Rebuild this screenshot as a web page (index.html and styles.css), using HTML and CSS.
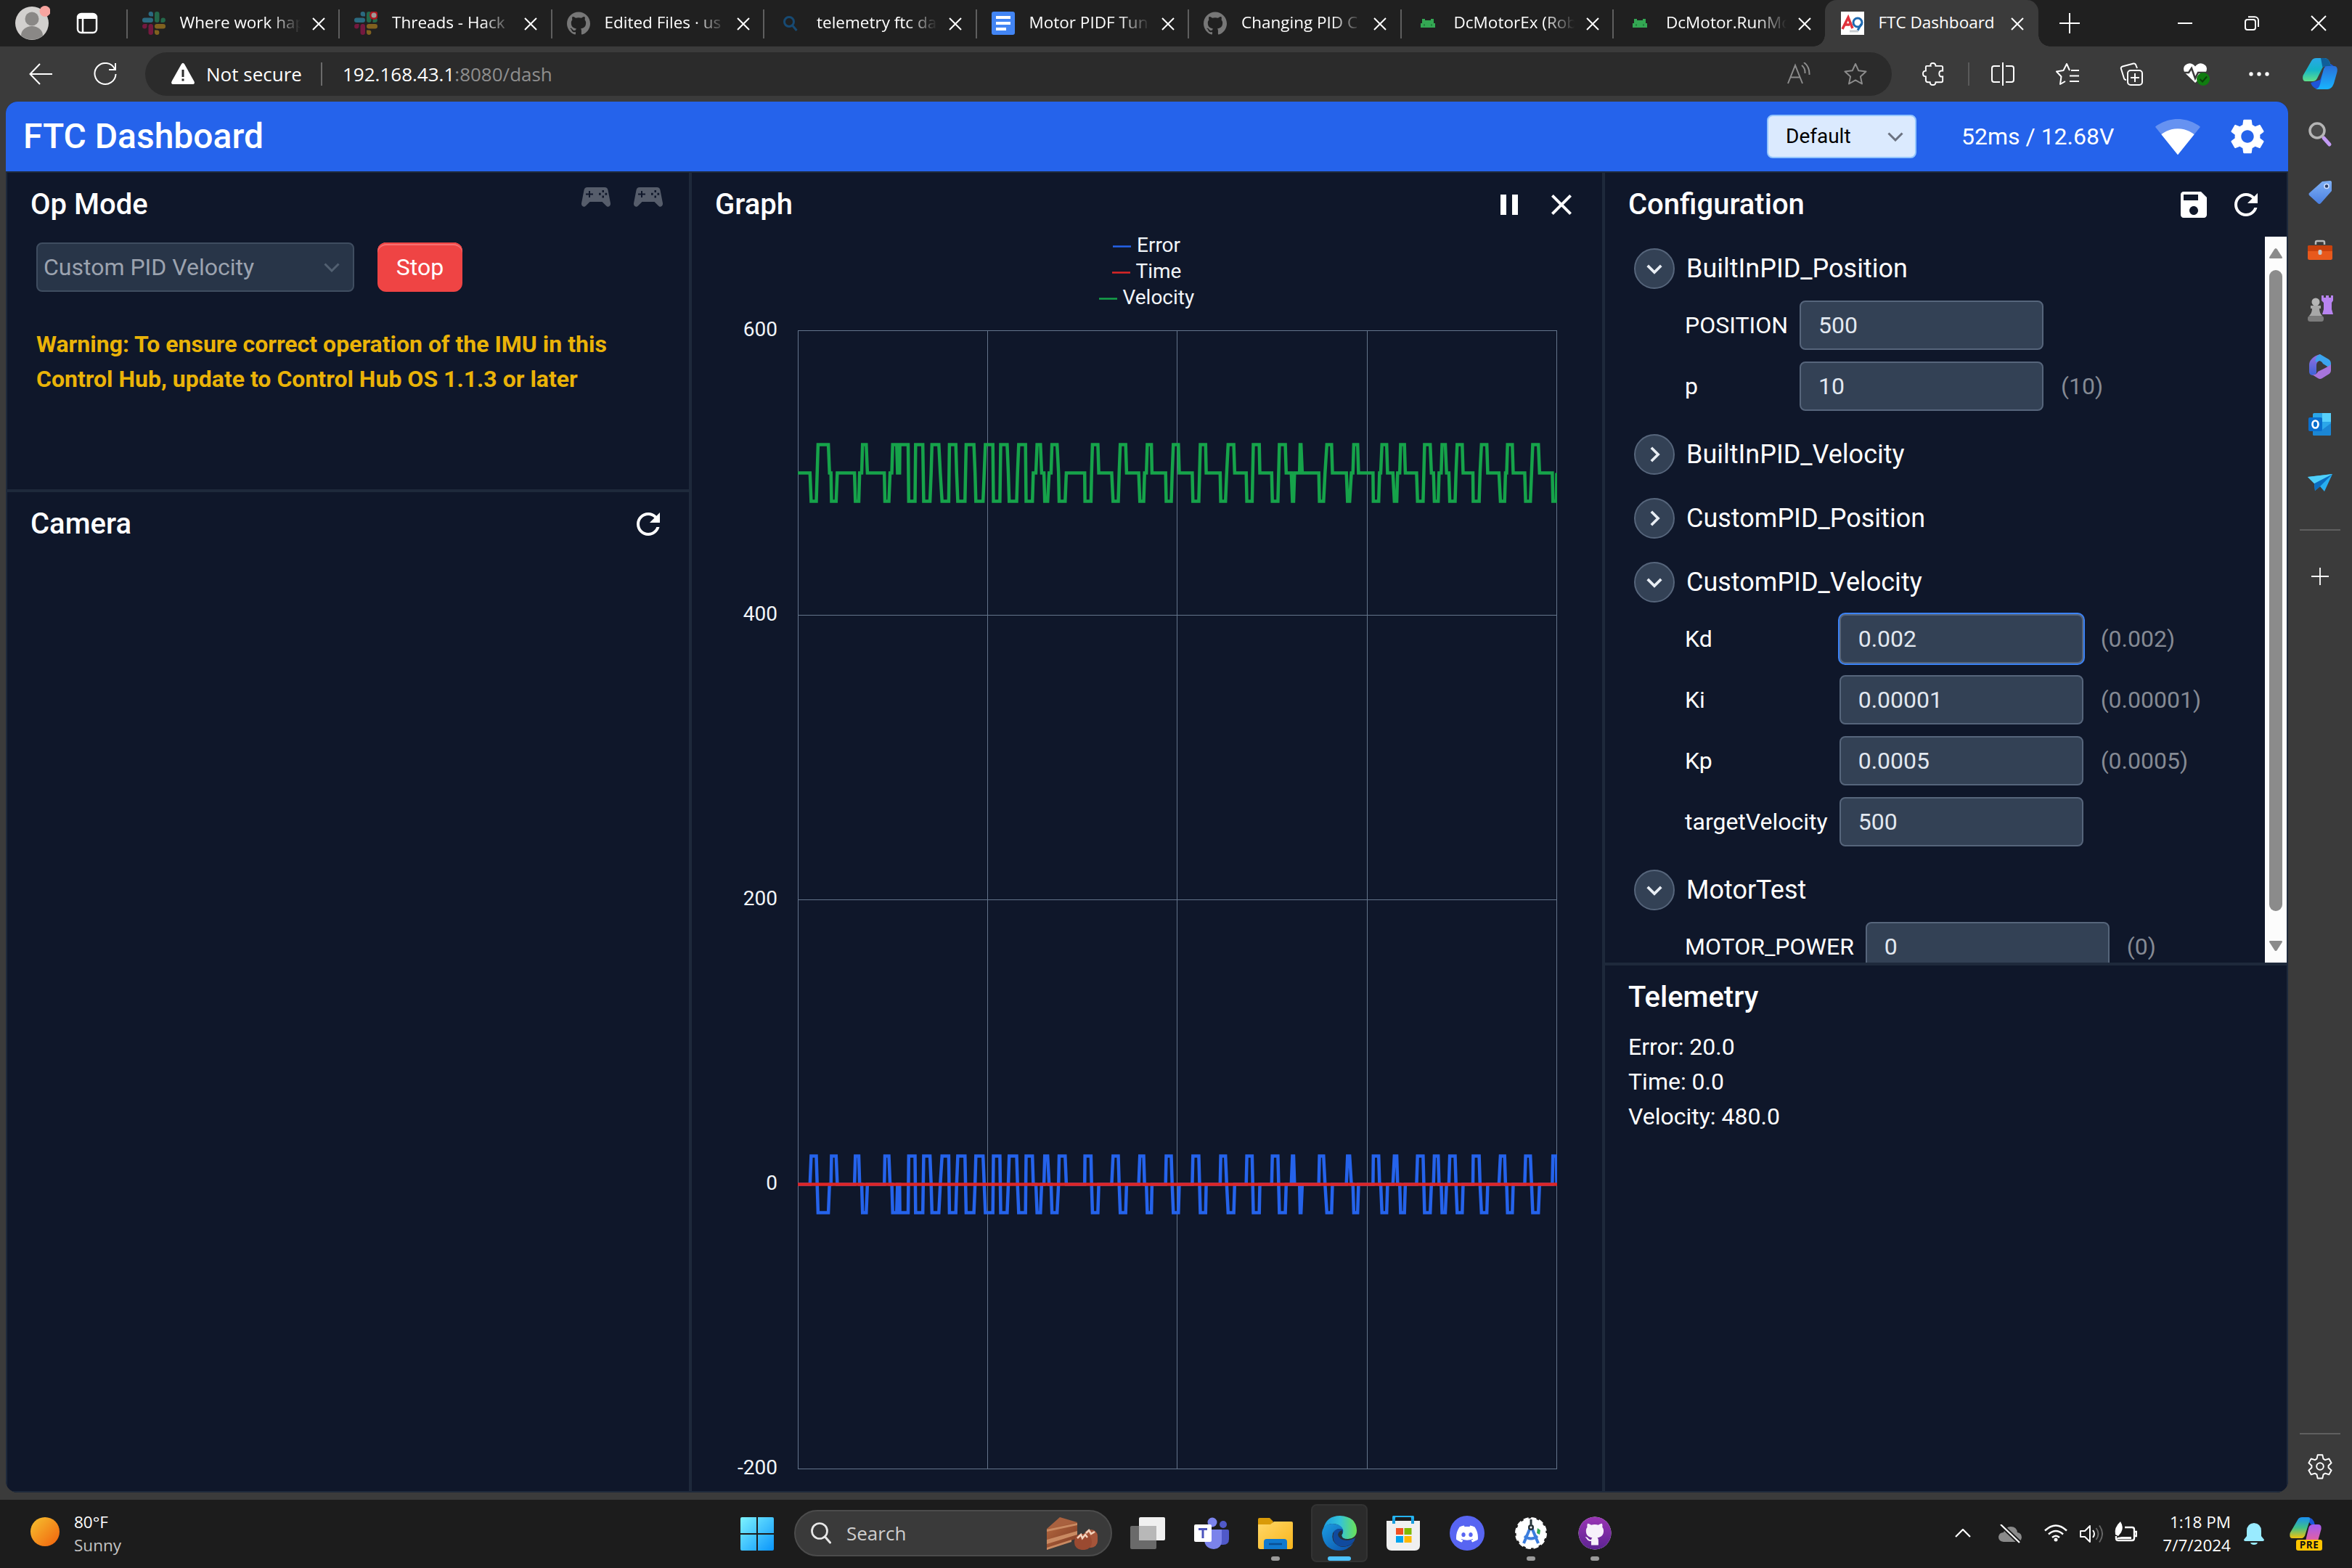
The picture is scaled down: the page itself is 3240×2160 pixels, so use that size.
FILE: index.html
```html
<!DOCTYPE html>
<html lang="en">
<head>
<meta charset="utf-8">
<title>FTC Dashboard</title>
<link rel="stylesheet" href="styles.css">
</head>
<body>
<svg class="defs" width="0" height="0">
  <defs>
    <linearGradient id="g-sun" x1="0" y1="0" x2="1" y2="1"><stop offset=".1" stop-color="#f5b92c"/><stop offset=".9" stop-color="#f26a10"/></linearGradient>
    <linearGradient id="g-win" x1="0" y1="0" x2="1" y2="1"><stop offset="0" stop-color="#7df3ff"/><stop offset="1" stop-color="#0a95fb"/></linearGradient>
    <linearGradient id="g-cop1" x1="0" y1="0" x2="0" y2="1"><stop offset="0" stop-color="#2aa7e8"/><stop offset=".5" stop-color="#14b4c8"/><stop offset="1" stop-color="#5fe08a"/></linearGradient>
    <linearGradient id="g-cop2" x1="0" y1="0" x2="0" y2="1"><stop offset="0" stop-color="#2a6fd8"/><stop offset="1" stop-color="#18b4ff"/></linearGradient>
    <linearGradient id="g-pre1" x1="0" y1="0" x2="0" y2="1"><stop offset="0" stop-color="#1a8ff0"/><stop offset=".5" stop-color="#3fc08a"/><stop offset="1" stop-color="#f4c20c"/></linearGradient>
    <linearGradient id="g-pre2" x1="0" y1="0" x2="0" y2="1"><stop offset="0" stop-color="#a25bf0"/><stop offset="1" stop-color="#f8618a"/></linearGradient>
    <linearGradient id="g-edge1" x1="0" y1="0" x2="1" y2="0"><stop offset="0" stop-color="#1b9de2"/><stop offset=".5" stop-color="#34c3d8"/><stop offset="1" stop-color="#6be355"/></linearGradient>
    <linearGradient id="g-edge2" x1="0" y1="0" x2="1" y2="1"><stop offset="0" stop-color="#1b9de2"/><stop offset="1" stop-color="#0c4da8"/></linearGradient>
    <linearGradient id="g-folder" x1="0" y1="0" x2="1" y2="1"><stop offset="0" stop-color="#ffd768"/><stop offset="1" stop-color="#f8b51b"/></linearGradient>
    <linearGradient id="g-tag" x1="0" y1="0" x2="0" y2="1"><stop offset="0" stop-color="#7fb0f5"/><stop offset="1" stop-color="#4a7fe0"/></linearGradient>
    <linearGradient id="g-m365" x1="0" y1="0" x2="0" y2="1"><stop offset="0" stop-color="#9a6fe0"/><stop offset="1" stop-color="#3b63d8"/></linearGradient>
    <linearGradient id="g-cake" x1="0" y1="0" x2="1" y2="1"><stop offset="0" stop-color="#b4683f"/><stop offset="1" stop-color="#7d3a24"/></linearGradient>
    <linearGradient id="g-git" x1="0" y1="0" x2="0" y2="1"><stop offset="0" stop-color="#9a35b5"/><stop offset="1" stop-color="#5c2391"/></linearGradient>
  </defs>
  <symbol id="slack" viewBox="0 0 32 32">
    <g fill="#2b6a80"><rect x="0" y="8.500" width="15" height="6.500" rx="3.200"/><path d="M15 6.500h-3.200A3.200 3.200 0 1 1 15 3.200z"/></g>
    <g fill="#24684a"><rect x="17" y="0" width="6.500" height="15" rx="3.200"/><path d="M25.500 15v-3.300a3.200 3.200 0 1 1 3.200 3.300z"/></g>
    <g fill="#80611f"><rect x="17" y="17" width="15" height="6.500" rx="3.200"/><path d="M17 25.500h3.200A3.200 3.200 0 1 1 17 28.800z"/></g>
    <g fill="#74193f"><rect x="8.500" y="17" width="6.500" height="15" rx="3.200"/><path d="M6.500 17v3.300A3.200 3.200 0 1 1 3.300 17z"/></g>
  </symbol>
  <symbol id="github" viewBox="0 0 24 24"><path d="M12 .297c-6.63 0-12 5.373-12 12 0 5.303 3.438 9.800 8.205 11.385.6.113.82-.258.82-.577 0-.285-.01-1.040-.015-2.040-3.338.724-4.042-1.610-4.042-1.610C4.422 18.070 3.633 17.700 3.633 17.700c-1.087-.744.084-.729.084-.729 1.205.084 1.838 1.236 1.838 1.236 1.070 1.835 2.809 1.305 3.495.998.108-.776.417-1.305.76-1.605-2.665-.3-5.466-1.332-5.466-5.930 0-1.310.465-2.380 1.235-3.220-.135-.303-.54-1.523.105-3.176 0 0 1.005-.322 3.300 1.230.96-.267 1.980-.399 3-.405 1.020.006 2.040.138 3 .405 2.280-1.552 3.285-1.230 3.285-1.230.645 1.653.24 2.873.12 3.176.765.84 1.230 1.910 1.230 3.220 0 4.610-2.805 5.625-5.475 5.920.42.36.81 1.096.81 2.220 0 1.606-.015 2.896-.015 3.286 0 .315.21.69.825.57C20.565 22.092 24 17.592 24 12.297c0-6.627-5.373-12-12-12"/></symbol>
  <symbol id="droid" viewBox="0 0 32 32"><path fill="#34a853" d="M8 10h4v2h8v-2h4v6h2v6H6v-6h2z"/><path d="M11 17v3M21 17v3" stroke="#1f7a3b" stroke-width="1.500"/></symbol>
  <symbol id="x" viewBox="0 0 18 18"><path d="M1 1l16 16M17 1L1 17" stroke="#fff" stroke-width="2" fill="none"/></symbol>
  <symbol id="refresh" viewBox="0 0 24 24"><path fill="#fff" d="M17.650 6.350C16.200 4.900 14.210 4 12 4c-4.420 0-7.990 3.580-7.990 8s3.570 8 7.990 8c3.730 0 6.840-2.550 7.730-6h-2.080c-.82 2.330-3.040 4-5.650 4-3.310 0-6-2.690-6-6s2.690-6 6-6c1.660 0 3.140.69 4.220 1.780L13 11h7V4l-2.350 2.350z"/></symbol>
  <symbol id="pad" viewBox="0 0 40 27"><path fill="#565d6b" fill-rule="evenodd" d="M8 0h24c2.500 0 4 1.500 4.500 4L40 22c.5 4-3.500 6.500-6 3.500L28.500 20h-17L6 25.500C3.500 28.500-.5 26 0 22L3.500 4C4 1.500 5.500 0 8 0zM10 5v3.500H6v2h4V14h2v-3.500h4v-2h-4V5zM28.500 4v3h2.500V4zM28.500 11.500v3h2.500v-3zM24 7.800v3h2.700v-3zM32.500 7.800v3h2.700v-3z"/></symbol>
  <symbol id="down" viewBox="0 0 56 56"><path d="M18 23.500l10 10 10-10" stroke="#e8edf3" stroke-width="4" fill="none"/></symbol>
  <symbol id="right" viewBox="0 0 56 56"><path d="M23.500 18l10 10-10 10" stroke="#e8edf3" stroke-width="4" fill="none"/></symbol>
</svg>

<header class="tabs">
  <svg class="avatar" viewBox="0 0 48 48"><circle cx="23" cy="25" r="23" fill="#d2d0ce"/><circle cx="23" cy="19" r="9.500" fill="#8a8886"/><path d="M8 42a15 13 0 0 1 30 0 23 23 0 0 1-30 0z" fill="#8a8886"/><circle cx="41" cy="8.500" r="7.500" fill="#f8a5a0"/></svg>
  <svg class="tabmenu" viewBox="0 0 30 30"><rect x="2" y="2" width="26" height="26" rx="5" fill="none" stroke="#fff" stroke-width="2.500"/><path d="M2 9V6q0-4 4-4h18q4 0 4 4v3z" fill="#fff"/><path d="M9 9v19" stroke="#fff" stroke-width="2.500"/></svg>
  <div class="tab"><svg class="fav"><use href="#slack"/></svg><span class="tt">Where work hap</span><svg class="cl"><use href="#x"/></svg></div>
  <div class="tab"><svg class="fav" viewBox="0 0 32 32"><use href="#slack" width="32" height="32"/><circle cx="27" cy="5" r="6" fill="#b0141e"/><circle cx="27" cy="5" r="3.500" fill="#a09a98"/></svg><span class="tt">Threads - Hack</span><svg class="cl"><use href="#x"/></svg></div>
  <div class="tab"><svg class="fav" fill="#777"><use href="#github"/></svg><span class="tt">Edited Files · us</span><svg class="cl"><use href="#x"/></svg></div>
  <div class="tab"><svg class="fav" viewBox="0 0 32 32"><circle cx="14" cy="14" r="6.500" fill="none" stroke="#174a73" stroke-width="3"/><path d="M18.500 19l6 7" stroke="#174a73" stroke-width="3"/></svg><span class="tt">telemetry ftc da</span><svg class="cl"><use href="#x"/></svg></div>
  <div class="tab"><svg class="fav" viewBox="0 0 32 32"><rect width="32" height="32" rx="3" fill="#4285f4"/><path d="M6 8h20M6 16h20M6 24h14" stroke="#fff" stroke-width="4"/></svg><span class="tt">Motor PIDF Tun</span><svg class="cl"><use href="#x"/></svg></div>
  <div class="tab"><svg class="fav" fill="#777"><use href="#github"/></svg><span class="tt">Changing PID C</span><svg class="cl"><use href="#x"/></svg></div>
  <div class="tab"><svg class="fav"><use href="#droid"/></svg><span class="tt">DcMotorEx (Rob</span><svg class="cl"><use href="#x"/></svg></div>
  <div class="tab"><svg class="fav"><use href="#droid"/></svg><span class="tt">DcMotor.RunMo</span><svg class="cl"><use href="#x"/></svg></div>
  <div class="tab active"><svg class="fav" viewBox="0 0 32 32"><path fill="#fff" d="M0 0h32v32H0z"/><path d="M2 24L10 8l6 15M5 18h7" fill="none" stroke="#e0323c" stroke-width="3.500"/><circle cx="23" cy="15" r="6" fill="none" stroke="#1c68b0" stroke-width="3"/><path d="M28 17l-5 9" stroke="#1c68b0" stroke-width="3"/><path d="M12 27h12" stroke="#c8ccd0" stroke-width="3"/></svg><span class="tt full">FTC Dashboard</span><svg class="cl"><use href="#x"/></svg></div>
  <svg class="newtab" viewBox="0 0 28 28"><path d="M14 0v28M0 14h28" stroke="#fff" stroke-width="2"/></svg>
  <div class="win">
    <svg viewBox="0 0 20 20"><path d="M0 10h20" stroke="#fff" stroke-width="2"/></svg>
    <svg viewBox="0 0 20 20"><rect x="1" y="5" width="14" height="14" rx="3" fill="none" stroke="#fff" stroke-width="2"/><path d="M5 1.200h9a5 5 0 0 1 5 5V15" fill="none" stroke="#fff" stroke-width="2"/></svg>
    <svg viewBox="0 0 20 20"><path d="M0 0l20 20M20 0L0 20" stroke="#fff" stroke-width="2"/></svg>
  </div>
</header>

<div class="toolbar">
  <svg class="back" viewBox="0 0 32 32"><path d="M32 16H1.500M15 2L1.500 16 15 30" fill="none" stroke="#fff" stroke-width="2"/></svg>
  <svg class="reload" viewBox="0 0 32 32"><path d="M29 9A14.500 14.500 0 1 0 30.500 16M30 1v9h-9" fill="none" stroke="#fff" stroke-width="2"/></svg>
  <div class="url">
    <svg class="warn" viewBox="0 0 32 32"><path fill="#fff" d="M13.800 2.500q2.200-3.600 4.400 0L31.400 26q1.600 4-2.400 4H3q-4 0-2.400-4z"/><path d="M16 10v10M16 22.500v3" stroke="#2b2b2b" stroke-width="3"/></svg>
    <span class="sec">Not secure</span><i class="bar"></i><span class="addr">192.168.43.1<em>:8080/dash</em></span>
    <svg class="read" viewBox="0 0 32 32"><path d="M1 29L11 4l10 25M4.500 20.500h13M20 4q5 4 4.500 11M23 0q8 6 7.500 17" fill="none" stroke="#8c8c8c" stroke-width="2"/></svg>
    <svg class="star" viewBox="0 0 32 32"><path d="M16 2l4.300 9.300 10.200 1.200-7.600 6.900 2.100 10.100-9-5.100-9 5.100 2.100-10.100L1.500 12.500l10.200-1.200z" fill="none" stroke="#8c8c8c" stroke-width="2" stroke-linejoin="round"/></svg>
  </div>
  <svg class="ti puzzle" viewBox="0 0 32 32"><path d="M5 5h6q-1-4 3-4t4 4h8q2 0 2 2v5q-5-1-5 4t5 4v6q0 2-2 2h-8q0 4-4 4t-4-4H7q-3 0-3-3v-5q-4 0-4-4t4-4V7q0-2 1-2z" fill="none" stroke="#fff" stroke-width="2" transform="translate(2 0)scale(.97)"/></svg>
  <i class="bar thin"></i>
  <svg class="ti split" viewBox="0 0 32 32"><path d="M12 5H4q-3 0-3 3v16q0 3 3 3h8M20 5h8q3 0 3 3v16q0 3-3 3h-8M16 0v32" fill="none" stroke="#fff" stroke-width="2"/></svg>
  <svg class="ti favs" viewBox="0 0 32 32"><path d="M19 11l-4-9-4.500 9L1 12.500l6.500 7L6 30l7-4M21 11h11M19 18.500h13M19 26h13" fill="none" stroke="#fff" stroke-width="2" stroke-linejoin="round"/></svg>
  <svg class="ti coll" viewBox="0 0 32 32"><rect x="11" y="11" width="20" height="20" rx="4" fill="none" stroke="#fff" stroke-width="2"/><path d="M21 15v12M15 21h12M24 8l-2-5q-1-2-3-1.500L4 5.500Q1 6.500 2 9l4 13q.6 2 3 2" fill="none" stroke="#fff" stroke-width="2"/></svg>
  <svg class="heart" viewBox="0 0 38 34"><path fill="#fff" d="M17 28L3 14.500Q-1 8 3 4q7-6 14 1.500Q24-2 31 4q4 4 0 10.500z"/><path d="M0 14h8l4-6 5 14 4-8h12" fill="none" stroke="#3b3b3b" stroke-width="2.500"/><circle cx="28" cy="23" r="9" fill="#107c10"/><path d="M23.500 23l3.500 3.500 6-7" fill="none" stroke="#0a3f0a" stroke-width="2"/></svg>
  <svg class="dots" viewBox="0 0 28 6" fill="#fff"><circle cx="3" cy="3" r="2.700"/><circle cx="14" cy="3" r="2.700"/><circle cx="25" cy="3" r="2.700"/></svg>
  <svg class="copilot" viewBox="0 0 48 44"><path d="M24 30l8-22q4-3 12 4l-8 24q-4 8-12 7-10 0-13-9z" fill="#1e55d8"/><path d="M12 4q2-4 7-4h11q6 0 8 8l1 3h-7q-4 0-6 5l-6 12q-2 4-6 4H4q-5 0-3.500-8z" fill="url(#g-cop1)"/><path d="M30 0q6 0 8 8l1 3h-7q-3 0-4.500 2L25 0z" fill="#0f5f9a"/><path d="M29 15q2-4 6-4h8q6 0 4.500 8L43 35q-3 8-9 8H17q5 0 7-7z" fill="url(#g-cop2)"/></svg>
</div>

<div class="middle">
  <main class="page">
    <div class="appbar">
      <h1>FTC Dashboard</h1>
      <div class="layout-select"><span>Default</span><svg viewBox="0 0 22 13"><path d="M1.500 1.500L11 11l9.500-9.500" fill="none" stroke="#6b7280" stroke-width="3"/></svg></div>
      <span class="ping">52ms / 12.68V</span>
      <svg class="wifi" viewBox="0 0 24 24" fill="#fff"><path fill-opacity=".3" d="M12.010 21.490L23.640 7c-.45-.34-4.930-4-11.640-4C5.280 3 .81 6.660.36 7l11.630 14.490.01.01z"/><path d="M3.530 10.950l8.460 10.540.01.01.01-.01 8.460-10.540C20.040 10.620 16.810 8 12 8c-4.810 0-8.040 2.620-8.470 2.950z"/></svg>
      <svg class="gear" viewBox="0 0 24 24"><path fill="#fff" d="M19.140 12.940c.04-.3.06-.61.06-.94 0-.32-.02-.64-.07-.94l2.030-1.580c.18-.14.23-.41.12-.61l-1.920-3.320c-.12-.22-.37-.29-.59-.22l-2.390.96c-.5-.38-1.030-.7-1.620-.94l-.36-2.540c-.04-.24-.24-.41-.48-.41h-3.840c-.24 0-.43.17-.47.41l-.36 2.540c-.59.24-1.130.57-1.620.94l-2.390-.96c-.22-.08-.47 0-.59.22L2.740 8.870c-.12.21-.08.47.12.61l2.030 1.580c-.05.3-.09.63-.09.94s.02.64.07.94l-2.030 1.580c-.18.14-.23.41-.12.61l1.920 3.320c.12.22.37.29.59.22l2.390-.96c.5.38 1.030.7 1.620.94l.36 2.540c.05.24.24.41.48.41h3.840c.24 0 .44-.17.47-.41l.36-2.540c.59-.24 1.130-.56 1.620-.94l2.390.96c.22.08.47 0 .59-.22l1.920-3.320c.12-.22.07-.47-.12-.61l-2.010-1.580zM12 15.600c-1.980 0-3.600-1.620-3.600-3.600s1.620-3.600 3.600-3.600 3.600 1.620 3.600 3.600-1.620 3.600-3.600 3.600z"/></svg>
    </div>
    <div class="cols">
      <div class="col left">
        <section class="opmode">
          <div class="head"><h2>Op Mode</h2><div class="pads"><svg><use href="#pad"/></svg><svg><use href="#pad"/></svg></div></div>
          <div class="oprow"><div class="opsel"><span>Custom PID Velocity</span><svg viewBox="0 0 22 13"><path d="M1.500 1.500L11 11l9.500-9.500" fill="none" stroke="#526071" stroke-width="3"/></svg></div><button class="stop">Stop</button></div>
          <p class="warning">Warning: To ensure correct operation of the IMU in this Control Hub, update to Control Hub OS 1.1.3 or later</p>
        </section>
        <section class="camera"><div class="head"><h2>Camera</h2><svg class="ic"><use href="#refresh"/></svg></div></section>
      </div>
      <section class="col graph">
        <div class="head"><h2>Graph</h2><div class="acts"><svg class="ic" viewBox="0 0 24 24"><path fill="#fff" d="M6 19h4V5H6v14zm8-14v14h4V5h-4z"/></svg><svg class="ic" viewBox="0 0 24 24"><path fill="#fff" d="M19 6.410L17.590 5 12 10.590 6.410 5 5 6.410 10.590 12 5 17.590 6.410 19 12 13.410 17.590 19 19 17.590 13.410 12z"/></svg></div></div>
        <svg class="plot" viewBox="953 326 1254 1728">
          <defs>
            <clipPath id="area"><rect x="1099" y="455" width="1046" height="1569"/></clipPath>
            <path id="wave" d="M1099 0H1115.800L1117.400 39H1124.500L1126.900-39H1141.100L1142.700 0H1144.700L1145.400 39H1151.800L1153.400 0H1177.100L1178.300 39H1183L1184.200 0H1187L1188.200-39H1193.300L1194.900 0H1218.200L1219 39H1224.500L1226.100 0H1228.500L1229.700-39H1235.200L1236.400 0H1239.200L1239.600-39H1251L1251.800 39H1260.500L1261.300-39H1271.200L1272.400 39H1281.100L1282.700 0 1283.800-39H1293.300L1295.300 0 1297.700 39H1306.900L1307.900-39H1316.700L1317.800 0 1319.400 39H1329.300L1330.900-39H1341.600L1343.200 0 1344.300 39H1354.200L1355.800 0 1357.400-39H1367.700L1368.500 39H1377.400L1378.500-39H1387.400L1389 0 1390.200 39H1400.500L1401.700 0 1403.300-39H1412.700L1413.500 39H1422.200L1423.400 0H1427L1428.600-39H1433.300L1434.900 0H1438.100L1439.200 39H1443.200L1445.200 0H1447.900L1449.100-39H1456.200L1458.200 0 1459 39H1467.300L1468.900 0H1494.200L1494.600 39H1502.900L1503.700 0 1504.900-39H1512.400L1513.600 0H1531.400L1533.300 39H1540.500L1541.700 0 1543.200-39H1550.700L1551.900 0H1568.600L1570.200 39H1575.500L1576.700 0H1579.200L1580.400-39H1586.100L1586.900 0H1605.700L1606.500 39H1613.500L1614.700 0 1616.300-39H1623.300L1624.500 0H1642.400L1643.300 39H1651.400L1653.500-39H1660.800L1661.600 0H1680.800L1681.600 39H1688.200L1689.800 0 1691.800-39H1699.600L1700.800 0H1716.700L1717.600 39H1724.900L1726.500-39H1734.700L1735.500 0H1751.800L1752.700 39H1760.400L1762.400-39H1770.600L1771.800 0H1778.800L1780.400 39H1782L1783.300 0H1790.200L1791-39H1792.200L1793.900 0H1816.700L1817.600 39H1823.300L1825.300 0 1827.800-39H1834.300L1835.500 0H1854.700L1856.300 39H1859.200L1861.600 0H1863.700L1864.900-39H1870.200L1871.400 0H1891.400L1891.800 39H1899.200L1900.400 0H1902L1903.700-39H1910.200L1911.400 0H1918.800L1920.800 39H1924.100L1925.300 0H1928.200L1929.400-39H1934.700L1935.900 0H1951.400L1952.700 39H1960.400L1962.400-39H1970.200L1971.800 0H1974.700L1975.900 39H1981.200L1982.400 0H1985.300L1986.500-39H1991L1992.700 0H1995.900L1997.100 39H2004.500L2005.700 0 2007.300-39H2014.300L2015.500 0H2029L2029.400 39H2037.600L2038.800 0 2040.800-39H2048.200L2049.400 0H2064.900L2066.900 39H2072.700L2073.900 0H2075.500L2076.700-39H2083.300L2084.500 0H2100.400L2101.600 39H2108.200L2109.800 0 2111.400-39H2119.200L2120.800 0H2138.400L2139.200 39H2143.900L2144.500 0"/>
          </defs>
          <path d="M1099 455.500H2145M1099 847.500H2145M1099 1239.500H2145M1099 1631.500H2145M1099 2023.500H2145M1099.500 455V2024M1360.500 455V2024M1621.500 455V2024M1883.500 455V2024M2144.500 455V2024" stroke="#64748b" fill="none"/>
          <g clip-path="url(#area)" fill="none" stroke-width="4.500">
            <use href="#wave" y="651.500" stroke="#16a34a"/>
            <use href="#wave" transform="translate(0 1631.500)scale(1 -1)" stroke="#2563eb"/>
            <path d="M1099 1631.500H2145" stroke="#dc2626"/>
          </g>
          <path d="M1533 339.500h25" stroke="#2563eb" stroke-width="2.500"/><path d="M1532 375.500h25" stroke="#dc2626" stroke-width="2.500"/><path d="M1514 411.500h25" stroke="#16a34a" stroke-width="2.500"/>
          <g class="lbl"><text x="1566" y="347">Error</text><text x="1564.500" y="383">Time</text><text x="1546.500" y="419">Velocity</text></g>
          <g class="lbl end"><text x="1071" y="463">600</text><text x="1071" y="855">400</text><text x="1071" y="1247">200</text><text x="1071" y="1639">0</text><text x="1071" y="2031">-200</text></g>
        </svg>
      </section>
      <div class="col right">
        <section class="config">
          <div class="head"><h2>Configuration</h2><div class="acts"><svg class="ic" viewBox="0 0 24 24"><path fill="#fff" d="M17 3H5c-1.110 0-2 .9-2 2v14c0 1.100.89 2 2 2h14c1.100 0 2-.9 2-2V7l-4-4zm-5 16c-1.660 0-3-1.340-3-3s1.340-3 3-3 3 1.340 3 3-1.340 3-3 3zm3-10H5V5h10v4z"/></svg><svg class="ic"><use href="#refresh"/></svg></div></div>
          <div class="scroll">
            <div class="tree">
              <div class="grp"><svg class="knob"><use href="#down"/></svg>BuiltInPID_Position</div>
              <div class="vars">
                <span>POSITION</span><div class="in">500</div><em></em>
                <span>p</span><div class="in">10</div><em>(10)</em>
              </div>
              <div class="grp"><svg class="knob"><use href="#right"/></svg>BuiltInPID_Velocity</div>
              <div class="grp"><svg class="knob"><use href="#right"/></svg>CustomPID_Position</div>
              <div class="grp"><svg class="knob"><use href="#down"/></svg>CustomPID_Velocity</div>
              <div class="vars">
                <span>Kd</span><div class="in focus">0.002</div><em>(0.002)</em>
                <span>Ki</span><div class="in">0.00001</div><em>(0.00001)</em>
                <span>Kp</span><div class="in">0.0005</div><em>(0.0005)</em>
                <span>targetVelocity</span><div class="in">500</div><em></em>
              </div>
              <div class="grp"><svg class="knob"><use href="#down"/></svg>MotorTest</div>
              <div class="vars"><span>MOTOR_POWER</span><div class="in">0</div><em>(0)</em></div>
            </div>
            <div class="sbar"><svg viewBox="0 0 18 14"><path d="M9 0q1 0 2 1.500l7 11q0 1.500-1 1.500H1q-1 0-1-1.500l7-11Q8 0 9 0z" fill="#8b8b8b"/></svg><i></i><svg class="dn" viewBox="0 0 18 14"><path d="M9 14q1 0 2-1.500l7-11Q18 0 17 0H1Q0 0 0 1.500l7 11Q8 14 9 14z" fill="#8b8b8b"/></svg></div>
          </div>
        </section>
        <section class="telemetry"><div class="head"><h2>Telemetry</h2></div><p>Error: 20.0<br>Time: 0.0<br>Velocity: 480.0</p></section>
      </div>
    </div>
  </main>
  <aside class="side">
    <svg viewBox="0 0 36 36"><path d="M23 23l8 9" stroke="#c39af5" stroke-width="5" stroke-linecap="round"/><circle cx="14" cy="13" r="10" fill="#4a4a4a" stroke="#b5b5b5" stroke-width="3.500"/></svg>
    <svg viewBox="0 0 36 36"><path d="M21 3l11-1q2 0 2 2v12L19 33q-2 2-4 0L3 22q-1-2 0-3z" fill="url(#g-tag)"/><circle cx="27" cy="9.500" r="3" fill="#2c3e66" stroke="#cfe0ff" stroke-width="1.500"/></svg>
    <svg viewBox="0 0 36 36"><path d="M12 10V7q0-2 2-2h8q2 0 2 2v3" fill="none" stroke="#b9b9b9" stroke-width="2.500"/><rect x="1" y="11" width="34" height="20" rx="2.500" fill="#e8591c"/><path d="M1 13q0-2 2-2h30q2 0 2 2v6H1z" fill="#c9410c"/><rect x="15.500" y="17" width="5" height="7" rx="2" fill="#c8c8c8"/></svg>
    <svg viewBox="0 0 36 36"><path d="M20 0h3v3h3V0h4v3h3V0h3v7l-2 3v9l2 7H21l2-7v-9l-3-3z" fill="#b884f0"/><circle cx="12" cy="9" r="5.500" fill="#b5b5b5"/><path d="M5 14h14v4h-2q0 6 4 10H3q4-4 4-10H5z" fill="#a8a8a8"/><rect x="1" y="28" width="22" height="8" rx="3.500" fill="#7c7c7c"/></svg>
    <svg viewBox="0 0 36 36"><path d="M18 1q-8 2-12 7-3 3-3 8v9q0 4 4 5 4 0 6-3V16q0-4 4-6 4-2 1-9z" fill="url(#g-m365)"/><path d="M18 1l12 7q3 2 3 6v7l-11-7q-2-4-6-4l-4 2q-2-8 6-11z" fill="#3ba4ee"/><path d="M33 15v8q0 4-4 6l-8 5q-3 2-6 0l-8-5q6 1 8-4l10-5q6-3 8-5z" fill="#a874dc"/></svg>
    <svg viewBox="0 0 36 36"><rect x="8" y="2" width="25" height="31" rx="2" fill="#2ba7ea"/><path d="M8 15l13 10 12-9v15q0 2-2 2H10q-2 0-2-2z" fill="#1b86d4"/><path d="M21 2h12v12H21z" fill="#58d0fb"/><rect x="2" y="8" width="19" height="19" rx="2" fill="#0a6fce"/><ellipse cx="11.500" cy="17.500" rx="4" ry="5" fill="none" stroke="#fff" stroke-width="2.700"/></svg>
    <svg viewBox="0 0 36 36"><path d="M1 10L35 6 24 30l-6-7-7 6-1-10z" fill="#27aef0"/><path d="M10 19L35 6 18 23l-7 6z" fill="#0b6dc0"/><path d="M1 10L35 6 10 19z" fill="#4fd0fa"/></svg>
    <hr>
    <svg class="add" viewBox="0 0 24 24"><path d="M12 0v24M0 12h24" stroke="#fff" stroke-width="1.800"/></svg>
    <hr class="low">
    <svg class="cog" viewBox="0 0 24 24"><path fill="none" stroke="#fff" stroke-width="1.300" stroke-linejoin="round" d="M9.800 1.500h4.400l.8 3.600 1.700 1 3.500-1.100 2.200 3.800-2.700 2.500v1.900l2.700 2.500-2.200 3.800-3.500-1.100-1.700 1-.8 3.600H9.800L9 19.400l-1.700-1-3.500 1.100-2.200-3.800 2.700-2.500v-1.900L1.600 8.800 3.800 5l3.500 1.100 1.700-1z"/><circle cx="12" cy="12" r="3.200" fill="none" stroke="#fff" stroke-width="1.300"/></svg>
  </aside>
</div>

<footer class="taskbar">
  <div class="weather"><svg viewBox="0 0 40 40"><circle cx="20" cy="20" r="20" fill="url(#g-sun)"/></svg><p>80°F<br><em>Sunny</em></p></div>
  <svg class="start" viewBox="0 0 46 46"><path fill="url(#g-win)" d="M2 0h20v22H0V2q0-2 2-2zM24 0h20q2 0 2 2v20H24zM0 24h22v22H2q-2 0-2-2zM24 24h22v20q0 2-2 2H24z"/></svg>
  <div class="search">
    <svg class="mag" viewBox="0 0 28 30"><circle cx="12" cy="12" r="10.500" fill="none" stroke="#e8e8e8" stroke-width="2.700"/><path d="M19.500 20l7 8" stroke="#e8e8e8" stroke-width="3" stroke-linecap="round"/></svg>
    <span>Search</span>
    <svg class="cake" viewBox="0 0 70 46"><path d="M0 16L18 0l24 7-10 5z" fill="#a9613f"/><path d="M0 16l42-9v22L0 45z" fill="url(#g-cake)"/><path d="M0 17l42-9v3L0 20zM0 31l42-12v5L0 37zM0 42l34-11v3L0 45z" fill="#c98a62"/><rect x="51" y="17" width="19" height="25" rx="9" fill="#a5553a"/><rect x="38" y="23" width="24" height="22" rx="10" fill="#9a4a31"/><path d="M42 29l5-5 2 5 4-5 3 4M54 22l4-4 3 5 5-3" stroke="#f3d3bd" stroke-width="2.500" fill="none"/></svg>
  </div>
  <svg class="tv" viewBox="0 0 48 44"><rect y="12" width="36" height="32" rx="2" fill="#6a6a6a"/><rect x="12" width="36" height="32" rx="2" fill="#f0f0f0"/><path d="M12 12h24v20H12z" fill="#b8b8b8"/></svg>
  <div class="apps">
    <div class="app"><svg viewBox="0 0 48 48"><circle cx="25" cy="9" r="6.500" fill="#7b83eb"/><circle cx="40" cy="12" r="5" fill="#5059c9"/><path d="M32 19h14q2 0 2 2v11q0 8-8 8h-8z" fill="#5059c9"/><path d="M14 19h24v15q0 11-11 12-13-1-13-14z" fill="#7b83eb"/><rect y="12" width="24" height="24" rx="2" fill="#fff"/><path d="M6 18.500h12M12 18.500V31" stroke="#4b53bc" stroke-width="3"/></svg></div>
    <div class="app run"><svg viewBox="0 0 48 48"><path d="M0 5q0-2 2-2h14l5 5-3 6H0z" fill="#d99a08"/><path d="M0 12h17l5-4h24q2 0 2 2v33q0 3-3 3H3q-3 0-3-3z" fill="url(#g-folder)"/><path d="M8 46V36q0-4 4-4h24q4 0 4 4v10z" fill="#1079cf"/><path d="M15 39h18" stroke="#0a4f93" stroke-width="2.500"/></svg></div>
    <div class="app run on"><svg viewBox="0 0 48 48"><path d="M2 18Q6 0 25 0q22 1 23 20 0 11-12 12-9 0-9-5 3-4 1-9-4-7-13-7-9 0-13 7z" fill="url(#g-edge1)"/><path d="M0 24Q1 12 14 11q12 0 15 8-9-3-14 5-3 11 7 17 9 5 21-3-7 10-20 10Q2 47 0 24z" fill="url(#g-edge2)"/><path d="M17 21q5-5 12-2 1 4-2 8 1 6 11 6 6-1 8-3-1 5-4 8-10 7-20 3-10-7-5-20z" fill="#104a9e"/><path d="M27 27q1 6 11 6l8-4q-6 5-12 5-11-1-12-8 1-5 6-6 1 4-1 7z" fill="#263238"/></svg></div>
    <div class="app"><svg viewBox="0 0 48 48"><path d="M11 11V3q0-3 3-3h20q3 0 3 3v8" fill="none" stroke="#25b4f0" stroke-width="4"/><path d="M1 7h46v34q0 7-7 7H8q-7 0-7-7z" fill="#f0f0f0"/><path d="M11 11V4M37 11V4" stroke="#1aa0e0" stroke-width="4"/><path d="M14 17h10v9H14z" fill="#f25022"/><path d="M25.500 17h10v9h-10z" fill="#7fba00"/><path d="M14 28h10v9H14z" fill="#00a4ef"/><path d="M25.500 28h10v9h-10z" fill="#ffb900"/></svg></div>
    <div class="app"><svg viewBox="0 0 48 48"><circle cx="24" cy="24" r="24" fill="#5865f2"/><g transform="translate(9 10)scale(1.250)"><path fill="#fff" d="M20.317 4.370a19.791 19.791 0 00-4.885-1.515.074.074 0 00-.079.037c-.211.375-.445.865-.608 1.250-1.845-.276-3.680-.276-5.487 0-.164-.393-.406-.874-.618-1.250a.077.077 0 00-.079-.037 19.736 19.736 0 00-4.885 1.515.07.07 0 00-.032.028C.533 9.046-.319 13.580.099 18.058a.082.082 0 00.031.056c2.053 1.508 4.041 2.423 5.993 3.029a.078.078 0 00.084-.028c.462-.63.873-1.295 1.226-1.994a.076.076 0 00-.042-.106c-.653-.248-1.274-.55-1.872-.892a.077.077 0 01-.008-.128c.126-.094.252-.192.372-.291a.074.074 0 01.078-.011c3.928 1.793 8.180 1.793 12.061 0a.074.074 0 01.079.01c.12.099.246.198.373.292a.077.077 0 01-.007.128 12.299 12.299 0 01-1.873.891.077.077 0 00-.041.107c.36.698.772 1.363 1.225 1.993a.076.076 0 00.084.029c1.961-.607 3.950-1.522 6.002-3.029a.077.077 0 00.031-.055c.5-5.177-.838-9.674-3.549-13.660a.061.061 0 00-.031-.029zM8.020 15.331c-1.183 0-2.157-1.086-2.157-2.419s.956-2.419 2.157-2.419c1.211 0 2.176 1.095 2.157 2.419 0 1.333-.956 2.419-2.157 2.419zm7.975 0c-1.183 0-2.157-1.086-2.157-2.419s.955-2.419 2.157-2.419c1.211 0 2.176 1.095 2.157 2.419 0 1.333-.946 2.419-2.157 2.419z"/></g></svg></div>
    <div class="app run"><svg viewBox="0 0 48 48"><circle cx="24" cy="24" r="20.500" fill="#fff" stroke="#fff" stroke-width="3" stroke-dasharray="7 3.700"/><path d="M24 14L14 38M24 14l10 24M15 28q9 7 18 0" fill="none" stroke="#3b7ddd" stroke-width="4"/><path d="M33 17l4 3-1 6-4-2z" fill="#34a853"/><circle cx="24" cy="16" r="4" fill="#263238"/><circle cx="24" cy="16" r="1.500" fill="#fff"/><path d="M24 5v7" stroke="#263238" stroke-width="3"/></svg></div>
    <div class="app run"><svg viewBox="0 0 48 48"><circle cx="24" cy="24" r="22.500" fill="#f3eef7"/><svg x="1.500" y="1.500" width="45" height="45" fill="url(#g-git)"><circle cx="22.500" cy="22.500" r="22.500"/></svg><path transform="translate(4 4)scale(1.660)" fill="#f6f0fa" d="M9 22v-3.500c-1.500.5-3-.3-3.600-1.600-.3-.6-.8-1.300-1.400-1.600 1.400-.3 2.200.6 2.700 1.300.6.9 1.400 1 2.400.7.100-.7.400-1.200.8-1.500-3.200-.5-5.200-2-5.200-5.600 0-1.300.4-2.300 1.100-3.100-.2-.7-.3-1.800.2-3.100 1.200 0 2.200.7 3 1.200 1.900-.5 4.100-.5 6 0 .8-.5 1.800-1.200 3-1.200.5 1.300.4 2.400.2 3.100.7.800 1.100 1.800 1.100 3.100 0 3.600-2 5.100-5.200 5.600.6.500.9 1.300.9 2.400V22z"/></svg></div>
  </div>
  <div class="tray">
    <svg class="up" viewBox="0 0 22 12"><path d="M1 11L11 1l10 10" fill="none" stroke="#fff" stroke-width="2.200"/></svg>
    <svg class="cloud" viewBox="0 0 34 26"><path d="M8 24q-7-1-7-7 1-6 7-6 3-8 10-8 8 0 9 8 6 1 6 7-1 6-7 6z" fill="#8a8a8a"/><path d="M4 0l26 25" stroke="#1c1c1c" stroke-width="6"/><path d="M4 0l26 25" stroke="#fff" stroke-width="2.200"/></svg>
    <svg class="wf" viewBox="0 0 32 24"><path d="M1 8.500q15-14 30 0M6 13.500q10-9 20 0M11 18q5-4.500 10 0" fill="none" stroke="#fff" stroke-width="2.500"/><circle cx="16" cy="21" r="2.500" fill="#fff"/></svg>
    <svg class="vol" viewBox="0 0 32 26"><path d="M1 9h6l7-7v22l-7-7H1z" fill="none" stroke="#fff" stroke-width="2" stroke-linejoin="round"/><path d="M18 8q4 5 0 10" fill="none" stroke="#fff" stroke-width="2"/><path d="M22.500 5q6 8 0 16M27 1.500q8 11.500 0 23" fill="none" stroke="#666" stroke-width="2"/></svg>
    <svg class="bat" viewBox="0 0 32 28"><path d="M15 8h10q3 0 3 3v12q0 3-3 3H6q-3 0-3-3v-3M28 14h3v6h-3" fill="none" stroke="#fff" stroke-width="2.400"/><path d="M2 18Q0 8 9 0q5 8 1 15l-4 5M5 22l6-1h13v3H4z" fill="#fff"/></svg>
    <p class="clock">1:18 PM<br>7/7/2024</p>
    <svg class="bell" viewBox="0 0 28 30"><path d="M14 0q10 1 10 11v7l4 5q0 2-2 2H2q-2 0-2-2l4-5v-7Q4 1 14 0zM9 27h10q-1 3-5 3t-5-3z" fill="#99ebff"/></svg>
    <div class="pre"><svg viewBox="0 0 48 44"><path d="M26 0q10 0 12 11h-6L24 0z" fill="#1a56d8"/><path d="M12 4q2-4 7-4h9q4 0 2 6l-7 22q-2 4-6 4H4q-5 0-3.500-8z" fill="url(#g-pre1)"/><path d="M29 15q2-4 6-4h8q6 0 4.500 8L43 35q-3 8-9 8H17q5 0 7-7z" fill="url(#g-pre2)"/></svg><b>PRE</b></div>
  </div>
</footer>
</body>
</html>
```
FILE: styles.css
```css
* { box-sizing: border-box; margin: 0; padding: 0; }
em, i { font-style: normal; }
svg { display: block; flex: none; }
.defs { position: absolute; }
body {
  width: 3240px; height: 2160px; overflow: hidden;
  display: flex; flex-direction: column;
  background: #3b3b3b; color: #fff;
  font-family: "Open Sans", "Noto Sans", sans-serif;
}

/* browser tab strip */
.tabs { height: 64px; background: #202020; display: flex; align-items: center; flex: none; }
.avatar { width: 48px; height: 48px; margin: -2px 0 0 21px; }
.tabmenu { width: 30px; height: 30px; margin: 0 39px 0 35.500px; }
.tab { width: 292.500px; height: 64px; display: flex; align-items: center; position: relative; flex: none; padding-left: 22px; }
.tab::before { content: ""; position: absolute; left: 0; top: 13px; width: 2px; height: 40px; background: #5e5e5e; }
.fav { width: 32px; height: 32px; }
.tt {
  width: 168px; margin-left: 20px; overflow: hidden; white-space: nowrap;
  font-size: 22.500px; line-height: 40px; margin-top: -2px;
  -webkit-mask-image: linear-gradient(90deg, #000 74%, transparent 99%);
  mask-image: linear-gradient(90deg, #000 74%, transparent 99%);
}
.tt.full { -webkit-mask-image: none; mask-image: none; }
.cl { width: 18px; height: 18px; margin: 2px 0 0 14px; }
.tab.active { width: 294px; background: #3b3b3b; border-radius: 16px 16px 0 0; }
.tab.active::before, .tab.active::after {
  content: ""; position: absolute; top: auto; bottom: 0; left: -16px; width: 16px; height: 16px;
  background: radial-gradient(circle at 0 0, transparent 15.500px, #3b3b3b 16px);
}
.tab.active::after { left: auto; right: -16px; background: radial-gradient(circle at 100% 0, transparent 15.500px, #3b3b3b 16px); }
.newtab { width: 28px; height: 28px; margin-left: 29px; }
.win { margin-left: auto; margin-right: 36px; display: flex; gap: 72px; }
.win svg { width: 20px; height: 20px; overflow: visible; }

/* address bar */
.toolbar { height: 76px; flex: none; display: flex; align-items: center; }
.back { width: 32px; height: 32px; margin-left: 40px; }
.reload { width: 32px; height: 32px; margin-left: 57px; }
.url { width: 2406px; height: 60px; margin-left: 39px; border-radius: 30px; background: #2b2b2b; display: flex; align-items: center; font-size: 26px; line-height: 40px; }
.warn { width: 32px; height: 32px; margin-left: 36px; }
.sec { margin-left: 16px; width: 158px; white-space: nowrap; }
.bar { width: 2px; height: 32px; background: #6b6b6b; }
.addr { margin-left: 28px; }
.addr em { color: #8f8f8f; }
.read { width: 32px; height: 32px; margin-left: auto; }
.star { width: 32px; height: 32px; margin: 0 34px 0 46px; }
.ti { width: 32px; height: 32px; }
.puzzle { margin-left: 41px; }
.bar.thin { margin-left: 32px; background: #5a5a5a; }
.split { margin-left: 30px; }
.favs { margin-left: 57px; }
.coll { margin-left: 56px; }
.heart { width: 38px; height: 34px; margin: 2px 0 0 55px; }
.dots { width: 28px; height: 6px; margin-left: 53px; }
.copilot { width: 48px; height: 44px; margin-left: 46px; }

/* dashboard */
.middle { height: 1926px; display: flex; flex: none; }
.page {
  width: 3144px; height: 1916px; margin-left: 8px; border-radius: 16px; overflow: hidden;
  background: #0f172a; display: flex; flex-direction: column;
  font-family: Roboto, sans-serif; font-size: 32px; line-height: 48px;
}
.appbar { height: 96px; flex: none; background: #2563eb; display: flex; align-items: center; padding-left: 24px; }
h1 { font-size: 48px; font-weight: 500; }
.layout-select {
  margin-left: auto; width: 206px; height: 60px; padding: 0 16px 0 24px;
  background: #dbeafe; border: 2px solid #93c5fd; border-radius: 8px; color: #000;
  font-size: 28px; display: flex; align-items: center; justify-content: space-between;
}
.layout-select svg, .opsel svg { width: 22px; height: 13px; }
.ping { margin-left: 62px; width: 210px; white-space: nowrap; }
.wifi { width: 64px; height: 64px; margin-left: 56px; }
.gear { width: 58px; height: 58px; margin: 0 27px 0 35px; }
.cols { flex: 1; display: flex; border: 2px solid #1e293b; }
.col { display: flex; flex-direction: column; }
.left { width: 939px; }
.graph { width: 1262px; border: solid #1e293b; border-width: 0 4px; }
.right { width: 939px; }
.head { height: 88px; flex: none; display: flex; align-items: center; justify-content: space-between; padding: 0 32px; }
h2 { font-size: 40px; font-weight: 500; }
.ic { width: 48px; height: 48px; }
.opmode { height: 436px; }
.pads { display: flex; gap: 32px; padding-right: 4px; margin-top: -21px; }
.pads svg { width: 40px; height: 27px; }
.oprow { display: flex; gap: 32px; margin: 8px 0 0 40px; }
.opsel {
  width: 438px; height: 68px; background: #283548; border: 2px solid #3f4d60; border-radius: 8px;
  color: #9ca3af; display: flex; align-items: center; justify-content: space-between; padding: 0 18px 0 8px;
}
.stop { width: 117px; height: 68px; background: #ef4444; border: 0; border-radius: 12px; color: #fff; font: inherit; box-shadow: inset 0 2px #ef4444, inset 0 4px #f87171; }
.warning { margin: 48px 40px 0; width: 820px; font-weight: 700; color: #eab308; }
.camera { flex: 1; border-top: 4px solid #1e293b; }
.acts { display: flex; gap: 24px; }
.graph .head { padding-right: 32px; }
.plot { width: 1254px; height: 1728px; }
.lbl { font-size: 28px; fill: #f1f5f9; }
.end { text-anchor: end; }

.config { height: 1088px; }
.scroll { height: 1000px; overflow: hidden; display: flex; justify-content: space-between; }
.tree { padding: 16px 0 0 40px; }
.grp { height: 56px; margin-bottom: 32px; display: flex; align-items: center; gap: 16px; font-size: 36px; }
.knob { width: 56px; height: 56px; border-radius: 50%; background: #334155; border: 2px solid #56657b; }
.vars { display: grid; grid-template-columns: auto 336px auto; justify-content: start; align-items: center; row-gap: 16px; margin: -16px 0 32px 70px; }
.vars > span { padding-right: 16px; }
.vars em { padding-left: 24px; color: #858a94; }
.in { height: 68px; background: #334155; border: 2px solid #56657b; border-radius: 8px; padding: 8px 24px; color: #e2e8f0; }
.focus { box-shadow: 0 0 0 2px #3b82f6; }
.sbar { width: 30px; background: #fcfcfc; display: flex; flex-direction: column; align-items: center; padding: 16px 0; }
.sbar svg { width: 18px; height: 14px; }
.sbar i { width: 18px; height: 883px; margin-top: 16px; border-radius: 9px; background: #8b8b8b; }
.sbar .dn { margin-top: auto; }
.telemetry { border-top: 4px solid #1e293b; }
.telemetry p { padding: 0 32px; }

/* browser sidebar */
.side { width: 88px; display: flex; flex-direction: column; align-items: center; padding-top: 27px; }
.side > svg { width: 36px; height: 36px; margin-bottom: 44px; }
.side hr { width: 56px; height: 2px; border: 0; background: #5f5f5f; margin-top: 2px; }
.side .add { width: 24px; height: 24px; margin: 51px 0 0; }
.side .low { margin-top: auto; }
.side .cog { width: 36px; height: 36px; margin: 26px 0 28px; }

/* taskbar */
.taskbar { height: 94px; flex: none; background: #1c1c1c; display: flex; align-items: center; padding-top: 0; }
.weather { width: 1020px; display: flex; align-items: center; gap: 20px; padding-left: 42px; font-size: 22.500px; line-height: 32px; }
.weather svg { width: 40px; height: 40px; margin-top: -6px; }
.weather em { color: #c4c4c4; }
.start { width: 46px; height: 46px; }
.search { width: 438px; height: 64px; margin: -2px 0 0 28px; border-radius: 32px; background: #3a3a3a; border: 2px solid #4c4c4c; display: flex; align-items: center; color: #cfcfcf; font-size: 26px; }
.mag { width: 28px; height: 30px; margin-left: 21px; }
.search span { margin-left: 21px; }
.cake { width: 70px; height: 46px; margin: 2px 18px 0 auto; }
.tv { width: 48px; height: 44px; margin: -2px 0 0 25px; }
.apps { display: flex; margin-left: 25px; gap: 10px; margin-top: -2px; }
.app { width: 78px; height: 80px; border-radius: 8px; display: flex; align-items: center; justify-content: center; position: relative; }
.app svg { width: 48px; height: 48px; }
.app.on { background: #2b2b2b; border: 2px solid #333; }
.run::after { content: ""; position: absolute; bottom: 2px; left: 33px; width: 12px; height: 6px; border-radius: 3px; background: #9a9a9a; }
.on::after { left: 21px; bottom: 0; width: 32px; background: #4cc2ff; }
.tray { margin-left: auto; display: flex; align-items: center; padding-right: 42px; }
.up { width: 22px; height: 12px; margin-right: 37px; margin-top: -3px; }
.cloud { width: 34px; height: 26px; margin-right: 30px; }
.wf { width: 32px; height: 24px; margin-right: 17px; margin-top: -3px; }
.vol { width: 32px; height: 26px; margin-right: 15px; }
.bat { width: 32px; height: 28px; margin-right: 31px; margin-top: -7px; }
.clock { width: 98px; text-align: right; font-size: 22.500px; line-height: 32px; white-space: nowrap; }
.bell { width: 28px; height: 30px; margin: 0 35px 0 18px; }
.pre { width: 44px; height: 46px; position: relative; }
.pre svg { width: 44px; height: 40px; }
.pre b { position: absolute; right: -1px; bottom: 0; width: 36px; height: 15px; border-radius: 3px; background: #ffc400; color: #111; font-size: 13.500px; line-height: 15px; text-align: center; letter-spacing: .5px; }
```
